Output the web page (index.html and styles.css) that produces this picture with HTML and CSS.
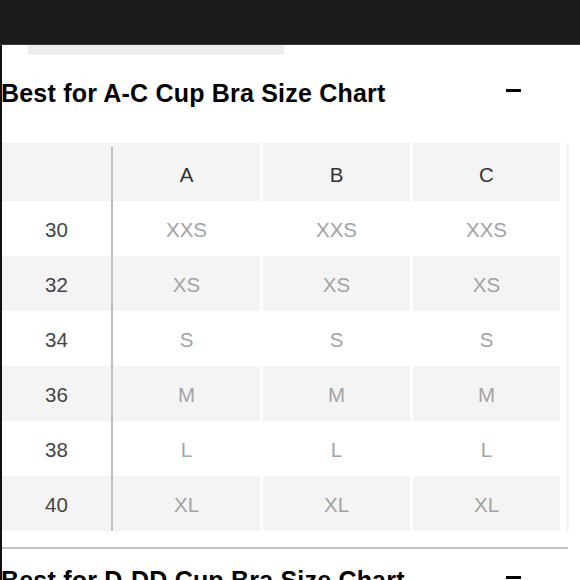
FILE: index.html
```html
<!DOCTYPE html>
<html>
<head>
<meta charset="utf-8">
<link rel="stylesheet" href="styles.css">
</head>
<body>
<div class="topbar"></div>
<div class="page">
  <div class="tab-strip"></div>
  <div class="section-head">
    <h2 class="section-title">Best for A-C Cup Bra Size Chart</h2>
    <span class="toggle"></span>
  </div>
  <div class="chart">
    <div class="grid">
      <div class="cell band head"></div>
      <div class="cell cup head">A</div>
      <div class="cell cup head">B</div>
      <div class="cell cup head">C</div>

      <div class="cell band">30</div>
      <div class="cell val">XXS</div>
      <div class="cell val">XXS</div>
      <div class="cell val">XXS</div>

      <div class="cell band shade">32</div>
      <div class="cell val shade">XS</div>
      <div class="cell val shade">XS</div>
      <div class="cell val shade">XS</div>

      <div class="cell band">34</div>
      <div class="cell val">S</div>
      <div class="cell val">S</div>
      <div class="cell val">S</div>

      <div class="cell band shade">36</div>
      <div class="cell val shade">M</div>
      <div class="cell val shade">M</div>
      <div class="cell val shade">M</div>

      <div class="cell band">38</div>
      <div class="cell val">L</div>
      <div class="cell val">L</div>
      <div class="cell val">L</div>

      <div class="cell band shade">40</div>
      <div class="cell val shade">XL</div>
      <div class="cell val shade">XL</div>
      <div class="cell val shade">XL</div>
    </div>
  </div>
  <div class="divider"></div>
  <div class="section-head next">
    <h2 class="section-title">Best for D-DD Cup Bra Size Chart</h2>
    <span class="toggle"></span>
  </div>
</div>
</body>
</html>
```
FILE: styles.css
```css
html, body {
  margin: 0;
  padding: 0;
  background: #ffffff;
  overflow: hidden;
}
body {
  font-family: "Liberation Sans", Arial, sans-serif;
  width: 580px;
  height: 580px;
}
.topbar {
  height: 45px;
  background: #1b1b1b;
  border-bottom: 1px solid #3a3a3a;
  box-sizing: border-box;
}
.page {
  border-left: 2px solid #111111;
  height: 535px;
  box-sizing: border-box;
}
.tab-strip {
  margin-left: 26px;
  width: 256px;
  height: 10px;
  background: #eeeeee;
}
.section-head {
  display: flex;
  justify-content: space-between;
  margin-top: 23px;
  margin-left: -1px;
}
.section-title {
  margin: 0;
  font-size: 25px;
  line-height: 30px;
  font-weight: bold;
  color: #000000;
  letter-spacing: 0.2px;
}
.toggle {
  width: 15px;
  height: 3px;
  background: #000000;
  margin-top: 11px;
  margin-right: 59px;
}
.chart {
  margin-top: 35px;
  width: 564px;
  border-right: 3px solid #f3f3f3;
}
.grid {
  display: grid;
  grid-template-columns: 111px 150px 150px 150px;
  grid-template-rows: 58px repeat(6, 55px);
}
.cell {
  display: flex;
  align-items: center;
  justify-content: center;
  font-size: 20.5px;
  box-sizing: border-box;
  background: #ffffff;
  padding-top: 3px;
}
.cell.head,
.cell.shade {
  background: #f4f4f4;
}
.band {
  color: #444444;
  border-right: 2px solid #bdbdbd;
}
.band.head {
  border-right: none;
  background:
    linear-gradient(#bdbdbd, #bdbdbd) 109px 4px / 2px 100% no-repeat,
    #f4f4f4;
}
.cup {
  color: #333333;
  border-right: 3px solid #ffffff;
  padding-top: 5px;
}
.val {
  color: #a3a3a3;
  border-right: 3px solid #ffffff;
}
.divider {
  margin-top: 16px;
  width: 566px;
  height: 2px;
  background: #c4c4c4;
}
.section-head.next {
  margin-top: 16px;
}
```
